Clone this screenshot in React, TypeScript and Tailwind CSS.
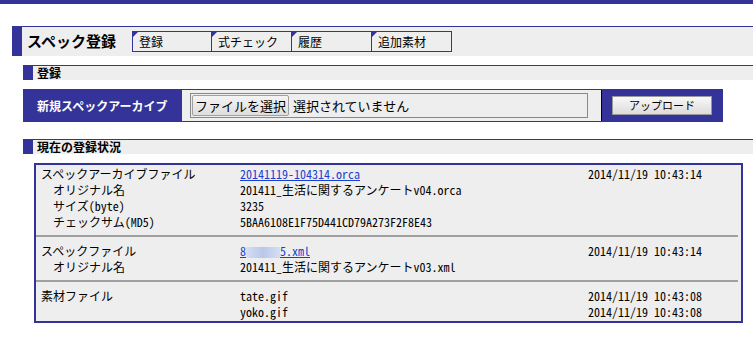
import React from 'react';

const jp = 'font-["Noto_Sans_CJK_JP","Noto_Sans",sans-serif]';
const half = 'font-["Noto_Sans_CJK_JP",sans-serif] [font-feature-settings:"hwid"]';

const tabs = ['登録', '式チェック', '履歴', '追加素材'];

type Row = { label: string; sub?: boolean; value?: React.ReactNode; date?: string };

const groups: Row[][] = [
  [
    { label: 'スペックアーカイブファイル', value: <a className="text-[#1a3fd0] underline">20141119-104314.orca</a>, date: '2014/11/19 10:43:14' },
    { label: 'オリジナル名', sub: true, value: '201411_生活に関するアンケートv04.orca' },
    { label: 'サイズ(byte)', sub: true, value: '3235' },
    { label: 'チェックサム(MD5)', sub: true, value: '5BAA6108E1F75D441CD79A273F2F8E43' },
  ],
  [
    {
      label: 'スペックファイル',
      value: (
        <a className="text-[#1a3fd0] underline">
          8<span className="inline-block w-[34px] h-[11px] align-middle bg-gradient-to-r from-[#d6def2] via-[#b9c7ea] to-[#d6def2]" />5.xml
        </a>
      ),
      date: '2014/11/19 10:43:14',
    },
    { label: 'オリジナル名', sub: true, value: '201411_生活に関するアンケートv03.xml' },
  ],
  [
    { label: '素材ファイル', value: 'tate.gif', date: '2014/11/19 10:43:08' },
    { label: '', value: 'yoko.gif', date: '2014/11/19 10:43:08' },
  ],
];

function SectionBar({ title }: { title: string }) {
  return (
    <div className="ml-[23px] flex h-[15px] border-t border-[#333399]">
      <div className="w-[10px] bg-[#333399]" />
      <div className={`flex-1 bg-[#eeeeee] pl-[4px] text-[12px] leading-[14px] font-bold text-black ${jp}`}>{title}</div>
    </div>
  );
}

export default function App() {
  return (
    <div className={`w-[753px] h-[342px] bg-white overflow-hidden ${jp}`}>
      <div className="h-[4px] bg-[#333399]" />

      <div className="mt-[22px] ml-[12px] flex h-[30px] border-t border-[#333399]">
        <div className="w-[10px] bg-[#333399]" />
        <div className="flex flex-1 items-center bg-[#eeeeee]">
          <div className="w-[110px] pl-[5px] text-[15px] font-bold text-black">スペック登録</div>
          <div className="flex">
            {tabs.map((t, i) => (
              <div
                key={t}
                className={`relative h-[21px] w-[80px] border-y border-r border-[#333399] ${i === 0 ? 'border-l' : ''} pl-[6px] text-[12px] leading-[19px] text-black`}
              >
                <span className="absolute left-0 top-0 h-0 w-0 border-t-[5px] border-r-[5px] border-t-[#333399] border-r-transparent" />
                {t}
              </div>
            ))}
          </div>
        </div>
      </div>

      <div className="mt-[9px]">
        <SectionBar title="登録" />
      </div>

      <div className="ml-[23px] mt-[9px] flex h-[33px] w-[700px] items-center bg-[#333399]">
        <div className="w-[159px] pl-[14px] text-[12px] font-bold text-white">新規スペックアーカイブ</div>
        <div className="flex h-[31px] w-[420px] items-center border-r border-black bg-[#eeeeee] pl-[8px]">
          <div className="flex h-[25px] w-[398px] items-center border border-[#888888] px-[1px]">
            <div className="flex h-[21px] w-[97px] items-center justify-center rounded-[2px] border border-[#a0a0a0] bg-gradient-to-b from-[#f4f4f4] to-[#dedede] text-[13px] text-black">
              ファイルを選択
            </div>
            <span className="ml-[4px] text-[13px] text-black">選択されていません</span>
          </div>
        </div>
        <div className="ml-[10px] flex h-[19px] w-[100px] items-center justify-center border border-[#999999] bg-gradient-to-b from-[#f8f8f8] to-[#dcdcdc] text-[11px] text-black">
          アップロード
        </div>
      </div>

      <div className="mt-[17px]">
        <SectionBar title="現在の登録状況" />
      </div>

      <div className={`ml-[34px] mt-[9px] w-[709px] border-2 border-[#333399] bg-[#eeeeee] ${half}`}>
        {groups.map((g, gi) => (
          <div
            key={gi}
            className={`${gi === 0 ? 'pt-[1px]' : 'pt-[6px]'} ${gi === groups.length - 1 ? 'pb-[1px]' : 'pb-[5px] border-b-2 border-[#a0a0a0] mr-[3px]'}`}
          >
            {g.map((r, ri) => (
              <div key={ri} className="flex h-[16px] items-center text-[12px] leading-[16px] text-black">
                <div className="w-[204px] shrink-0">
                  <span className={r.sub ? 'pl-[17px]' : 'pl-[5px]'}>{r.label}</span>
                </div>
                <div className="w-[348px] shrink-0 whitespace-nowrap">{r.value}</div>
                <div className="whitespace-nowrap">{r.date}</div>
              </div>
            ))}
          </div>
        ))}
      </div>
    </div>
  );
}
